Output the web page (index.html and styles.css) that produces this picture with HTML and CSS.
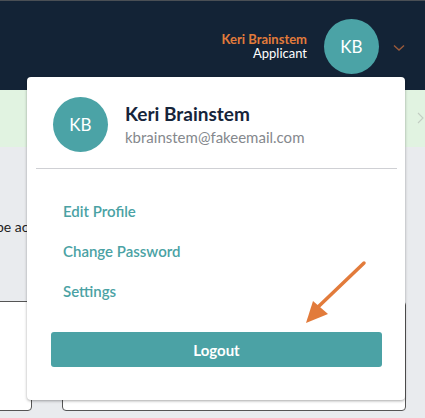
FILE: index.html
```html
<!DOCTYPE html>
<html>
<head>
<meta charset="utf-8">
<link rel="stylesheet" href="styles.css">
</head>
<body>
<header class="topbar">
  <div class="user">
    <div class="user-text">
      <div class="user-name">Keri Brainstem</div>
      <div class="user-role">Applicant</div>
    </div>
    <div class="avatar avatar-sm">KB</div>
    <svg class="chev" width="12" height="8" viewBox="0 0 12 8"><path d="M1 1.5 L6 6 L11 1.5" fill="none" stroke="#9a5a3b" stroke-width="1.4"/></svg>
  </div>
</header>
<div class="notice">
  <svg class="notice-chev" width="7" height="12" viewBox="0 0 7 12"><path d="M1 1 L6 6 L1 11" fill="none" stroke="#c3cec3" stroke-width="1.1"/></svg>
</div>
<main class="content">
  <p class="cut-text">be access</p>
  <div class="cards">
    <div class="card card-a"></div>
    <div class="card card-b"></div>
  </div>
</main>

<div class="menu">
  <div class="menu-head">
    <div class="avatar avatar-lg">KB</div>
    <div class="menu-id">
      <div class="menu-name">Keri Brainstem</div>
      <div class="menu-email">kbrainstem@fakeemail.com</div>
    </div>
  </div>
  <hr class="divider">
  <nav class="menu-links">
    <a href="#">Edit Profile</a>
    <a href="#">Change Password</a>
    <a href="#">Settings</a>
  </nav>
  <button class="logout">Logout</button>
</div>

<svg class="arrow" width="80" height="80" viewBox="0 0 80 80">
  <line x1="66" y1="6" x2="20" y2="50" stroke="#e27b3b" stroke-width="3.5" stroke-linecap="round"/>
  <polygon points="8,66 15,44 30,57" fill="#e27b3b"/>
</svg>
</body>
</html>
```

FILE: styles.css
```css
* { box-sizing: border-box; }
html, body { margin: 0; padding: 0; }
body {
  width: 425px;
  height: 418px;
  overflow: hidden;
  background: #e9ebee;
  font-family: "Lato", "Open Sans", sans-serif;
  position: relative;
}
.topbar {
  height: 90px;
  background: #132336;
  border-top: 1px solid #4a4f55;
  display: flex;
  justify-content: flex-end;
  align-items: flex-start;
}
.user {
  display: flex;
  align-items: center;
  margin-top: 18px;
  margin-right: 20px;
}
.user-text {
  text-align: right;
  margin-right: 17px;
  font-size: 13px;
  line-height: 14px;
  margin-top: -1px;
}
.user-name { color: #e27b3b; font-weight: 700; }
.user-role { color: #ffffff; }
.avatar {
  border-radius: 50%;
  background: #4ba3a6;
  color: #fff;
  display: flex;
  align-items: center;
  justify-content: center;
  flex: none;
}
.avatar-sm { width: 55px; height: 55px; font-size: 17px; }
.chev { margin-left: 14px; margin-top: 2px; }
.notice {
  height: 57px;
  background: #e1f3e1;
  display: flex;
  justify-content: flex-end;
  align-items: center;
}
.notice-chev { margin-right: 1px; margin-top: -2px; }
.content { position: relative; height: 271px; }
.cut-text {
  margin: 0;
  position: absolute;
  left: -4px;
  top: 71px;
  font-size: 14px;
  color: #222;
}
.cards {
  position: absolute;
  top: 154px;
  left: 0;
  right: 0;
}
.card {
  position: absolute;
  top: 0;
  height: 110px;
  background: #fff;
  border: 1px solid #555;
  border-radius: 4px;
}
.card-a { left: -10px; width: 42px; }
.card-b { left: 62px; width: 344px; }

.menu {
  position: absolute;
  left: 27px;
  top: 77px;
  width: 378px;
  height: 323px;
  background: #fff;
  border-radius: 4px;
  box-shadow: 0 1px 3px rgba(0,0,0,0.35);
  padding: 20px 8px 0 9px;
}
.menu-head {
  display: flex;
  align-items: center;
  padding-left: 17px;
}
.avatar-lg { width: 55px; height: 55px; font-size: 17px; }
.menu-id { margin-left: 17px; margin-top: -2px; }
.menu-name { font-size: 19px; font-weight: 700; color: #16243a; line-height: 24px; }
.menu-email { font-size: 15px; color: #85888d; line-height: 18px; margin-top: 2px; }
.divider {
  border: 0;
  border-top: 1px solid #cfd0d4;
  margin: 16px 0 0 0;
}
.menu-links {
  display: flex;
  flex-direction: column;
  padding-left: 27px;
  margin-top: 32px;
}
.menu-links a {
  color: #4aa2a4;
  text-decoration: none;
  font-size: 15px;
  font-weight: 600;
  line-height: 20px;
  margin-bottom: 20px;
}
.logout {
  display: block;
  margin: 11px 0 0 15px;
  width: 331px;
  height: 35px;
  background: #4ba2a5;
  border: 0;
  border-radius: 3px;
  color: #fff;
  font-family: inherit;
  font-size: 15px;
  font-weight: 700;
}
.arrow {
  position: absolute;
  left: 298px;
  top: 257px;
}
```
